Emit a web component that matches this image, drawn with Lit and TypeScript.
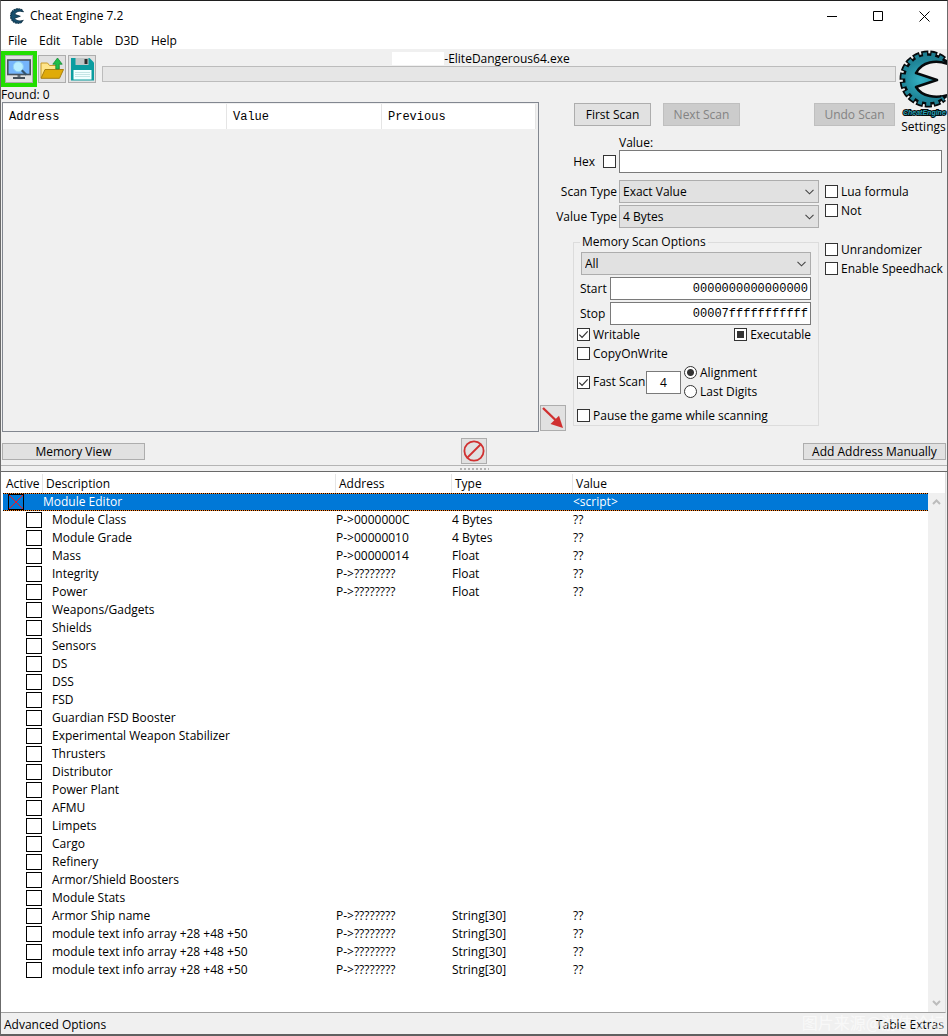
import { LitElement, html, css, svg, nothing } from "lit";
import { customElement, state } from "lit/decorators.js";
import { classMap } from "lit/directives/class-map.js";

interface Entry {
  description: string;
  address?: string;
  type?: string;
  value?: string;
}

const entry = (description: string, address?: string, type?: string): Entry => ({
  description,
  address,
  type,
  value: address ? "??" : undefined,
});

const ENTRIES: Entry[] = [
  entry("Module Class", "P->0000000C", "4 Bytes"),
  entry("Module Grade", "P->00000010", "4 Bytes"),
  entry("Mass", "P->00000014", "Float"),
  entry("Integrity", "P->????????", "Float"),
  entry("Power", "P->????????", "Float"),
  ...[
    "Weapons/Gadgets",
    "Shields",
    "Sensors",
    "DS",
    "DSS",
    "FSD",
    "Guardian FSD Booster",
    "Experimental Weapon Stabilizer",
    "Thrusters",
    "Distributor",
    "Power Plant",
    "AFMU",
    "Limpets",
    "Cargo",
    "Refinery",
    "Armor/Shield Boosters",
    "Module Stats",
  ].map((name) => entry(name)),
  entry("Armor Ship name", "P->????????", "String[30]"),
  entry("module text info array +28 +48 +50", "P->????????", "String[30]"),
  entry("module text info array +28 +48 +50", "P->????????", "String[30]"),
  entry("module text info array +28 +48 +50", "P->????????", "String[30]"),
];

/* The gear-shaped E shared by the title bar and the settings link. */
const BODY =
  "M51 13 L46 10.3 A24.5 24.5 0 1 0 46 49.7 L51 46 C39 49.5 25 48 19 38 L40 31 L19 24 C25 12.500 39 10.500 51 15 Z";
const TEETH = "M46.500 11 A24.500 24.500 0 1 0 46.500 49";

const emblem = (outline: number, fill: string, edge: string) => svg`
  <path d=${TEETH} fill="none" stroke=${edge} stroke-width="8" stroke-dasharray="6.400 1.800" />
  <path d=${BODY} fill=${fill} stroke=${edge} stroke-width=${outline} stroke-linejoin="round" />
  <path d=${TEETH} fill="none" stroke=${fill} stroke-width="4.500" stroke-dasharray="4 4.200"
    stroke-dashoffset="-1.200" />`;

const grad = svg`
  <radialGradient id="teal" gradientUnits="userSpaceOnUse" cx="24" cy="31" r="30">
    <stop offset="0" stop-color="#35b1c4" />
    <stop offset="0.6" stop-color="#1f8699" />
    <stop offset="1" stop-color="#1c7a8c" />
  </radialGradient>`;

@customElement("app-root")
export class AppRoot extends LitElement {
  @state() private selected = true;

  static styles = css`
    :host {
      display: block;
      font: 12px/16px "Open Sans", "Noto Sans", sans-serif;
      color: #000;
    }
    * {
      box-sizing: border-box;
    }
    button,
    input,
    select {
      font: inherit;
      color: inherit;
      margin: 0;
      border-radius: 0;
    }
    a {
      color: inherit;
      text-decoration: none;
    }
    .window {
      position: relative;
      display: flex;
      flex-direction: column;
      min-height: 100vh;
      background: #f0f0f0;
      border: 1px solid #6b6b6b;
      border-top-color: #1f1f1f;
      border-bottom: 2px solid #606060;
      overflow: hidden;
    }
    .titlebar {
      display: flex;
      align-items: center;
      height: 30px;
      padding-left: 8px;
      gap: 5px;
      background: #fff;
    }
    .titlebar h1 {
      flex: 1;
      margin: 0;
      font-size: 12px;
      font-weight: 400;
    }
    .caption {
      display: grid;
      place-items: center;
      width: 46px;
      height: 30px;
      margin-left: -5px;
      padding: 0;
      border: 0;
      background: none;
    }
    .menu {
      display: flex;
      gap: 12px;
      padding: 2px 7px 0;
      background: #fff;
    }
    .workspace {
      display: grid;
      grid-template-columns: 1fr 357px 50px;
      grid-template-rows: 53px minmax(330px, auto);
    }
    .toolbar {
      grid-column: 1 / 3;
      display: grid;
      grid-template-columns: auto 1fr;
      column-gap: 6px;
      padding: 2px 1px 0 0;
    }
    .tools {
      display: flex;
      align-items: center;
      height: 36px;
    }
    .tools .icon-button {
      margin-left: 2px;
    }
    .spotlight {
      display: flex;
      border: 4px solid #22de00;
      margin-right: -1px;
    }
    .tools .spotlight .icon-button {
      margin: 0;
    }
    .icon-button {
      display: grid;
      place-items: center;
      width: 28px;
      height: 28px;
      padding: 0;
      background: #e1e1e1;
      border: 1px solid #adadad;
    }
    .small {
      width: 26px;
      height: 26px;
    }
    .process {
      display: flex;
      flex-direction: column;
      min-width: 0;
    }
    .process-name {
      display: flex;
      justify-content: center;
      align-items: center;
      height: 15px;
      padding-right: 36px;
    }
    .mask {
      width: 52px;
      height: 13px;
      background: #fff;
    }
    .progress {
      height: 16px;
      background: #e6e6e6;
      border: 1px solid #bcbcbc;
    }
    .found {
      line-height: 15px;
    }
    .settings {
      grid-area: 1 / 3 / 3 / 4;
      align-self: start;
      z-index: 1;
      display: flex;
      flex-direction: column;
      align-items: center;
      padding-left: 3px;
    }
    .settings svg {
      display: block;
      margin-left: -3px;
    }
    .wordmark {
      font: italic 700 7px "Liberation Sans", sans-serif;
      fill: #27a0b4;
      stroke: #05090b;
      stroke-width: 2px;
      paint-order: stroke;
    }
    .results {
      grid-area: 2 / 1;
      margin: 0 1px;
      padding: 1px 2px 0 0;
      border: 1px solid #828790;
    }
    .results table {
      width: 100%;
      table-layout: fixed;
      border-spacing: 0;
      background: #fff;
      font: 12px/24px "Liberation Mono", monospace;
    }
    .results th {
      height: 25px;
      padding: 0 6px;
      text-align: left;
      font-weight: 400;
      border-right: 1px solid #e5e5e5;
    }
    .w-address {
      width: 224px;
    }
    .w-value {
      width: 155px;
    }
    .add {
      grid-area: 2 / 2;
      align-self: end;
      z-index: 1;
      margin-bottom: 1px;
    }
    .panel {
      grid-area: 2 / 2 / 3 / 4;
      padding: 1px 5px 0 0;
    }
    .scan-buttons {
      display: flex;
      gap: 12px;
      padding: 0 47px 0 34px;
    }
    .button {
      height: 23px;
      padding: 0;
      width: 77px;
      background: #e1e1e1;
      border: 1px solid #adadad;
      white-space: nowrap;
    }
    .button:disabled {
      background: #ccc;
      border-color: #bfbfbf;
      color: #838383;
    }
    .undo {
      width: 81px;
      margin-left: auto;
    }
    .value-label {
      display: block;
      margin: 10px 0 0 79px;
      line-height: 14px;
    }
    .row {
      display: flex;
      align-items: center;
      justify-content: flex-end;
      gap: 2px;
    }
    .grow {
      flex: 1;
      min-width: 0;
    }
    .check {
      display: flex;
      align-items: center;
      gap: 3px;
      height: 19px;
      white-space: nowrap;
    }
    .hex {
      width: 77px;
      justify-content: flex-end;
      gap: 8px;
      padding-right: 1px;
    }
    .field {
      height: 23px;
      padding: 0 2px;
      background: #fff;
      border: 1px solid #7a7a7a;
      outline: none;
    }
    .mono {
      font-family: "Liberation Mono", monospace;
      text-align: right;
    }
    .drop {
      appearance: none;
      height: 23px;
      padding: 0 20px 0 3px;
      border: 1px solid #adadad;
      background: #e1e1e1
        url("data:image/svg+xml,%3Csvg xmlns='http://www.w3.org/2000/svg' width='9' height='6'%3E%3Cpath d='M.5.8l4 4 4-4' fill='none' stroke='%23444' stroke-width='1.1'/%3E%3C/svg%3E")
        no-repeat right 4px center;
    }
    .box {
      appearance: none;
      flex: none;
      width: 13px;
      height: 13px;
      background: #fff center / 11px 11px no-repeat;
      border: 1px solid #333;
    }
    .box:checked {
      background-image: url("data:image/svg+xml,%3Csvg xmlns='http://www.w3.org/2000/svg' viewBox='0 0 11 11'%3E%3Cpath d='M1.3 5.6l2.8 2.8 5.6-6' fill='none' stroke='%23333' stroke-width='1.2'/%3E%3C/svg%3E");
    }
    .box:indeterminate {
      background: linear-gradient(#333, #333) center / 7px 7px no-repeat #fff;
    }
    .dot {
      appearance: none;
      flex: none;
      width: 13px;
      height: 13px;
      background: #fff;
      border: 1px solid #333;
      border-radius: 50%;
    }
    .dot:checked {
      background: radial-gradient(circle, #333 3px, #fff 4px);
    }
    .options {
      display: grid;
      grid-template-columns: 279px 1fr;
      gap: 6px;
      margin-top: 7px;
    }
    .selects {
      display: flex;
      flex-direction: column;
      gap: 2px;
    }
    .selects label {
      white-space: nowrap;
    }
    .selects .drop {
      flex: none;
      width: 200px;
    }
    .toggles {
      padding-top: 2px;
    }
    .toggles .apart {
      margin-top: 20px;
    }
    .memory {
      margin: 6px 0 0 33px;
      padding: 2px 7px 0 3px;
      border: 1px solid #dcdcdc;
      min-width: 0;
    }
    .memory legend {
      margin-left: 3px;
      padding: 0 2px;
    }
    .range {
      display: flex;
      flex-direction: column;
      gap: 2px;
      padding-left: 4px;
    }
    .range label {
      width: 27px;
      margin-left: -1px;
    }
    .range .row {
      gap: 3px;
    }
    .split {
      display: flex;
      justify-content: space-between;
    }
    .fast {
      display: flex;
      align-items: center;
      gap: 3px;
      margin-bottom: 5px;
    }
    .fast .check:first-child {
      width: 66px;
    }
    .fast .field {
      width: 35px;
      text-align: center;
    }
    .actions {
      display: flex;
      justify-content: space-between;
      align-items: center;
      height: 33px;
      padding: 5px 1px 0;
    }
    .actions .button {
      width: 143px;
      height: 17px;
      line-height: 15px;
    }
    .splitter {
      display: grid;
      place-items: center;
      height: 7px;
      border-top: 1px solid #b4b4b4;
      border-bottom: 1px solid #696969;
    }
    .grip {
      width: 29px;
      height: 2px;
      background: repeating-linear-gradient(90deg, #b4b4b4 0 2px, transparent 2px 4px);
    }
    .cheats {
      flex: 1;
      display: flex;
      margin-right: 1px;
      padding-left: 2px;
      background: #fff;
      border-right: 1px solid #dcdcdc;
      border-bottom: 1px solid #a0a0a0;
    }
    .list {
      flex: 1;
      min-width: 0;
    }
    .list table {
      width: 100%;
      table-layout: fixed;
      border-spacing: 0;
    }
    .list th {
      height: 21px;
      padding: 2px 0 0 3px;
      text-align: left;
      font-weight: 400;
      background: linear-gradient(#e5e5e5, #e5e5e5) right 2px / 1px 100% no-repeat;
    }
    .list th:last-child {
      background: none;
    }
    .list td {
      height: 18px;
      padding: 0;
      line-height: 16px;
      white-space: nowrap;
    }
    .w-active {
      width: 40px;
    }
    .w-desc {
      width: 293px;
    }
    .w-addr {
      width: 116px;
    }
    .w-type {
      width: 121px;
    }
    .list .child .tick {
      padding-left: 23px;
    }
    .list .child .name {
      padding-left: 9px;
    }
    .list .parent .tick {
      padding-left: 5px;
    }
    .chosen {
      color: #fff;
      background:
        repeating-linear-gradient(90deg, #000 0 1px, #ff8728 1px 2px) top / 100% 1px no-repeat,
        repeating-linear-gradient(90deg, #000 0 1px, #ff8728 1px 2px) bottom / 100% 1px no-repeat,
        #0078d7;
    }
    .cell {
      appearance: none;
      display: block;
      width: 16px;
      height: 16px;
      border: 1px solid #000;
    }
    .cell:checked {
      background: url("data:image/svg+xml,%3Csvg xmlns='http://www.w3.org/2000/svg' viewBox='0 0 14 14'%3E%3Cpath d='M0 0l14 14M14 0L0 14' stroke='%23f01820' stroke-width='1'/%3E%3C/svg%3E")
        0 0 / 14px 14px no-repeat;
    }
    .scrollbar {
      display: flex;
      flex-direction: column;
      justify-content: space-between;
      align-items: center;
      width: 17px;
      margin-top: 21px;
      padding: 6px 0;
      background: #f0f0f0;
    }
    .status {
      display: flex;
      justify-content: space-between;
      padding: 4px 3px 1px;
    }
    .watermark {
      position: absolute;
      right: 2px;
      bottom: 2px;
      font: 16px/20px "Noto Sans CJK SC", sans-serif;
      color: rgba(255, 255, 255, 0.6);
      pointer-events: none;
    }
  `;

  private check(label: string, opts: { on?: boolean; mixed?: boolean; apart?: boolean } = {}) {
    return html`<label class=${classMap({ check: true, apart: !!opts.apart })}>
      <input
        class="box"
        type="checkbox"
        ?checked=${opts.on}
        .indeterminate=${!!opts.mixed}
      />${label}
    </label>`;
  }

  private dropdown(id: string, label: string, value: string) {
    return html`<div class="row">
      <label for=${id}>${label}</label>
      <select class="drop" id=${id}>
        <option>${value}</option>
      </select>
    </div>`;
  }

  private range(id: string, label: string, value: string) {
    return html`<div class="row">
      <label for=${id}>${label}</label>
      <input class="field mono grow" id=${id} .value=${value} />
    </div>`;
  }

  private renderToolbar() {
    return html`<div class="toolbar">
      <div class="tools">
        <div class="spotlight">
          <button class="icon-button" aria-label="Open process">
            <svg width="24" height="24" viewBox="0 0 24 24">
              <path d="M10.5 17h3v3h-3z" fill="#66707a" />
              <path d="M6 20h12v2H6z" fill="#46505a" />
              <rect x="0.8" y="3" width="22.4" height="14.5" fill="#75b5fb" stroke="#48525c" stroke-width="1.6" />
              <circle cx="11.3" cy="9.7" r="5" fill="#b8eeff" stroke="#8fd2f4" />
              <path d="M14.8 13.2l4.4 4.6" stroke="#35536c" stroke-width="2.2" />
            </svg>
          </button>
        </div>
        <button class="icon-button" aria-label="Load table">
          <svg width="24" height="24" viewBox="0 0 24 24">
            <path d="M1 21V6h6.5l2 2.500H19V13" fill="#ffe58a" stroke="#c79a28" />
            <path d="M1 21.300L5 12.500h18.500l-4 8.800z" fill="#e0ab08" stroke="#a87f10" />
            <path d="M17.500 1l4.700 6.200h-3V12h-3.400V7.200h-3z" fill="#1fbf47" stroke="#158a35" stroke-width=".8" />
          </svg>
        </button>
        <button class="icon-button" aria-label="Save table">
          <svg width="24" height="24" viewBox="0 0 24 24">
            <path d="M1 1h18.500L24 5.500V23.500H1z" fill="#0b9da0" />
            <path d="M5.500 1h13v7h-13z" fill="#bfc6c6" />
            <path d="M14.500 2h3v5h-3z" fill="#2c2c2c" />
            <path d="M3.500 13h18v9.500h-18z" fill="#f2ffff" />
            <path d="M5 15.500h15M5 17.500h15M5 19.500h15" stroke="#b8dede" stroke-width=".8" />
          </svg>
        </button>
      </div>
      <div class="process">
        <div class="process-name"><span class="mask"></span>-EliteDangerous64.exe</div>
        <div class="progress" role="progressbar" aria-label="Scan progress"></div>
      </div>
      <div class="found">Found: 0</div>
    </div>`;
  }

  private renderPanel() {
    return html`<section class="panel">
      <div class="scan-buttons">
        <button class="button">First Scan</button>
        <button class="button" disabled>Next Scan</button>
        <button class="button undo" disabled>Undo Scan</button>
      </div>
      <label class="value-label" for="value">Value:</label>
      <div class="row">
        <label class="check hex">Hex <input class="box" type="checkbox" /></label>
        <input class="field grow" id="value" />
      </div>
      <div class="options">
        <div>
          <div class="selects">
            ${this.dropdown("scan-type", "Scan Type", "Exact Value")}
            ${this.dropdown("value-type", "Value Type", "4 Bytes")}
          </div>
          <fieldset class="memory">
            <legend>Memory Scan Options</legend>
            <div class="range">
              <select class="drop" aria-label="Memory region">
                <option>All</option>
              </select>
              ${this.range("start", "Start", "0000000000000000")}
              ${this.range("stop", "Stop", "00007fffffffffff")}
            </div>
            <div class="split">
              ${this.check("Writable", { on: true })}${this.check("Executable", { mixed: true })}
            </div>
            ${this.check("CopyOnWrite")}
            <div class="fast">
              ${this.check("Fast Scan", { on: true })}
              <input class="field" aria-label="Alignment value" .value=${"4"} />
              <div>
                <label class="check"><input class="dot" type="radio" name="align" checked />Alignment</label>
                <label class="check"><input class="dot" type="radio" name="align" />Last Digits</label>
              </div>
            </div>
            ${this.check("Pause the game while scanning")}
          </fieldset>
        </div>
        <div class="toggles">
          ${this.check("Lua formula")} ${this.check("Not")}
          ${this.check("Unrandomizer", { apart: true })} ${this.check("Enable Speedhack")}
        </div>
      </div>
    </section>`;
  }

  private renderCheats() {
    return html`<div class="cheats">
      <div class="list">
        <table>
          <thead>
            <tr>
              <th class="w-active">Active</th>
              <th class="w-desc">Description</th>
              <th class="w-addr">Address</th>
              <th class="w-type">Type</th>
              <th>Value</th>
            </tr>
          </thead>
          <tbody>
            <tr
              class=${classMap({ parent: true, chosen: this.selected })}
              @click=${() => (this.selected = true)}
            >
              <td class="tick">
                <input class="cell" type="checkbox" aria-label="Module Editor" checked />
              </td>
              <td class="name">Module Editor</td>
              <td></td>
              <td></td>
              <td>&lt;script&gt;</td>
            </tr>
            ${ENTRIES.map(
              (e) => html`<tr class="child">
                <td class="tick"><input class="cell" type="checkbox" aria-label=${e.description} /></td>
                <td class="name">${e.description}</td>
                <td>${e.address ?? nothing}</td>
                <td>${e.type ?? nothing}</td>
                <td>${e.value ?? nothing}</td>
              </tr>`
            )}
          </tbody>
        </table>
      </div>
      <div class="scrollbar" aria-hidden="true">
        <svg width="9" height="6" viewBox="0 0 9 6">
          <path d="M1 5l3.500-3.500L8 5" fill="none" stroke="#bcbcbc" stroke-width="2" />
        </svg>
        <svg width="9" height="6" viewBox="0 0 9 6">
          <path d="M1 1l3.500 3.500L8 1" fill="none" stroke="#bcbcbc" stroke-width="2" />
        </svg>
      </div>
    </div>`;
  }

  render() {
    return html`<main class="window">
      <header class="titlebar">
        <svg width="16" height="16" viewBox="2 1 52 58">${emblem(3, "#164f6e", "#0b2c40")}</svg>
        <h1>Cheat Engine 7.2</h1>
        <button class="caption" aria-label="Minimize">
          <svg width="11" height="11"><path d="M0 5.500h10" stroke="#000" /></svg>
        </button>
        <button class="caption" aria-label="Maximize">
          <svg width="11" height="11"><path d="M.5.5h9v9h-9z" fill="none" stroke="#000" /></svg>
        </button>
        <button class="caption" aria-label="Close">
          <svg width="11" height="11"><path d="M.5.5l10 10m0-10l-10 10" stroke="#000" /></svg>
        </button>
      </header>
      <nav class="menu">
        ${["File", "Edit", "Table", "D3D", "Help"].map((m) => html`<a href="#">${m}</a>`)}
      </nav>
      <div class="workspace">
        ${this.renderToolbar()}
        <div class="results">
          <table>
            <thead>
              <tr>
                <th class="w-address">Address</th>
                <th class="w-value">Value</th>
                <th>Previous</th>
              </tr>
            </thead>
          </table>
        </div>
        ${this.renderPanel()}
        <button class="icon-button small add" aria-label="Add selected address">
          <svg width="24" height="24" viewBox="0 0 24 24">
            <path d="M2 2l13 12.500" stroke="#d03030" stroke-width="2.400" />
            <path d="M22 22L9.500 18 18 9.800z" fill="#d03030" />
          </svg>
        </button>
        <a class="settings" href="#">
          <svg width="50" height="70" viewBox="0 0 50 70">
            <defs>${grad}</defs>
            ${emblem(2.5, "url(#teal)", "#05090b")}
            <text class="wordmark" x="6" y="66">CheatEngine</text>
          </svg>
          Settings
        </a>
      </div>
      <div class="actions">
        <button class="button">Memory View</button>
        <button class="icon-button small" aria-label="Clear list">
          <svg width="22" height="22" viewBox="0 0 22 22">
            <g fill="none" stroke="#d03030" stroke-width="1.800">
              <circle cx="11" cy="11" r="9.600" />
              <path d="M4.500 17.500l13-13" />
            </g>
          </svg>
        </button>
        <button class="button">Add Address Manually</button>
      </div>
      <div class="splitter"><span class="grip"></span></div>
      ${this.renderCheats()}
      <footer class="status">
        <a href="#">Advanced Options</a>
        <a href="#">Table Extras</a>
      </footer>
      <span class="watermark">图片来源@游侠论坛</span>
    </main>`;
  }
}
